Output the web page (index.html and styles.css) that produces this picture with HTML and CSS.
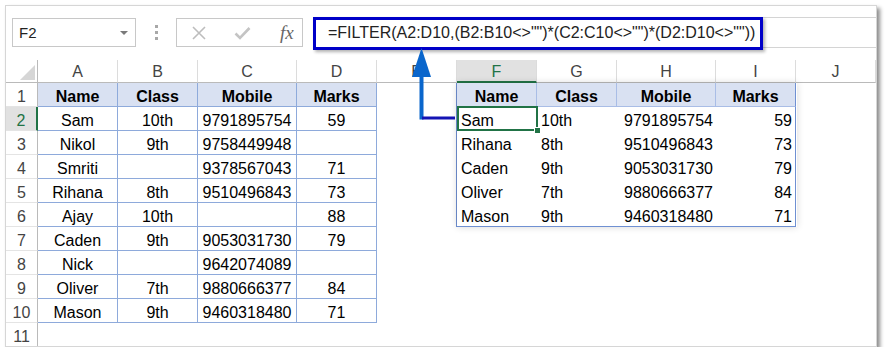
FILE: index.html
```html
<!DOCTYPE html>
<html>
<head>
<meta charset="utf-8">
<link rel="stylesheet" href="styles.css">
</head>
<body>
<div class="window">
  <div class="toolbar">
    <div class="namebox"><span>F2</span><span class="caret"></span></div>
    <div class="dots"><i></i><i></i><i></i></div>
    <div class="fxbox">
      <svg class="ico-x" width="14" height="14" viewBox="0 0 14 14"><path d="M1 1L13 13M13 1L1 13" stroke="#bdbdbd" stroke-width="1.6" fill="none"/></svg>
      <svg class="ico-ok" width="17" height="14" viewBox="0 0 17 14"><path d="M1.5 7.5L6 12L15.5 2" stroke="#c4c4c4" stroke-width="2.6" fill="none"/></svg>
      <span class="fx">fx</span>
    </div>
    <div class="fbar">=FILTER(A2:D10,(B2:B10&lt;&gt;"")*(C2:C10&lt;&gt;"")*(D2:D10&lt;&gt;""))</div>
  </div>

  <div class="sheet">
    <!-- column headers -->
    <div class="c corner"><svg width="15" height="15" viewBox="0 0 15 15"><polygon points="15,0 15,15 0,15" fill="#d6d6d6"/></svg></div>
    <div class="c ch">A</div><div class="c ch">B</div><div class="c ch">C</div><div class="c ch">D</div><div class="c ch">E</div>
    <div class="c ch selc">F</div><div class="c ch">G</div><div class="c ch">H</div><div class="c ch">I</div><div class="c ch">J</div>

    <!-- row 1 -->
    <div class="c rh">1</div>
    <div class="c t hd">Name</div><div class="c t hd">Class</div><div class="c t hd">Mobile</div><div class="c t hd">Marks</div>
    <div class="c eb"></div>
    <div class="c hd hb">Name</div><div class="c hd hb">Class</div><div class="c hd hb">Mobile</div><div class="c hd hb obr">Marks</div>
    <div class="c"></div>

    <!-- row 2 -->
    <div class="c rh selr">2</div>
    <div class="c t">Sam</div><div class="c t">10th</div><div class="c t">9791895754</div><div class="c t">59</div>
    <div class="c eb"></div>
    <div class="c l act">Sam</div><div class="c l">10th</div><div class="c r">9791895754</div><div class="c r obr">59</div>
    <div class="c"></div>

    <!-- row 3 -->
    <div class="c rh">3</div>
    <div class="c t">Nikol</div><div class="c t">9th</div><div class="c t">9758449948</div><div class="c t"></div>
    <div class="c eb"></div>
    <div class="c l">Rihana</div><div class="c l">8th</div><div class="c r">9510496843</div><div class="c r obr">73</div>
    <div class="c"></div>

    <!-- row 4 -->
    <div class="c rh">4</div>
    <div class="c t">Smriti</div><div class="c t"></div><div class="c t">9378567043</div><div class="c t">71</div>
    <div class="c eb"></div>
    <div class="c l">Caden</div><div class="c l">9th</div><div class="c r">9053031730</div><div class="c r obr">79</div>
    <div class="c"></div>

    <!-- row 5 -->
    <div class="c rh">5</div>
    <div class="c t">Rihana</div><div class="c t">8th</div><div class="c t">9510496843</div><div class="c t">73</div>
    <div class="c eb"></div>
    <div class="c l">Oliver</div><div class="c l">7th</div><div class="c r">9880666377</div><div class="c r obr">84</div>
    <div class="c"></div>

    <!-- row 6 -->
    <div class="c rh">6</div>
    <div class="c t">Ajay</div><div class="c t">10th</div><div class="c t"></div><div class="c t">88</div>
    <div class="c eb"></div>
    <div class="c l obb">Mason</div><div class="c l obb">9th</div><div class="c r obb">9460318480</div><div class="c r obr obb">71</div>
    <div class="c"></div>

    <!-- row 7 -->
    <div class="c rh">7</div>
    <div class="c t">Caden</div><div class="c t">9th</div><div class="c t">9053031730</div><div class="c t">79</div>
    <div class="c"></div><div class="c"></div><div class="c"></div><div class="c"></div><div class="c"></div><div class="c"></div>

    <!-- row 8 -->
    <div class="c rh">8</div>
    <div class="c t">Nick</div><div class="c t"></div><div class="c t">9642074089</div><div class="c t"></div>
    <div class="c"></div><div class="c"></div><div class="c"></div><div class="c"></div><div class="c"></div><div class="c"></div>

    <!-- row 9 -->
    <div class="c rh">9</div>
    <div class="c t">Oliver</div><div class="c t">7th</div><div class="c t">9880666377</div><div class="c t">84</div>
    <div class="c"></div><div class="c"></div><div class="c"></div><div class="c"></div><div class="c"></div><div class="c"></div>

    <!-- row 10 -->
    <div class="c rh">10</div>
    <div class="c t">Mason</div><div class="c t">9th</div><div class="c t">9460318480</div><div class="c t">71</div>
    <div class="c"></div><div class="c"></div><div class="c"></div><div class="c"></div><div class="c"></div><div class="c"></div>

    <!-- row 11 -->
    <div class="c rh">11</div>
    <div class="c"></div><div class="c"></div><div class="c"></div><div class="c"></div>
    <div class="c"></div><div class="c"></div><div class="c"></div><div class="c"></div><div class="c"></div><div class="c"></div>
  </div>

  <div class="tshadow"></div>
  <div class="hl"></div>
  <svg class="arrow" width="870" height="340" viewBox="0 0 870 340">
    <rect x="413.5" y="68" width="4" height="45.5" fill="#0a66cc"/>
    <polygon points="415.5,42 406,71 425,71" fill="#0a66cc"/>
    <rect x="416" y="110.5" width="33" height="3" fill="#1414b4"/>
  </svg>
</div>
</body>
</html>
```

FILE: styles.css
```css
body {
  margin: 0;
  background: #ffffff;
  font-family: "Liberation Sans", Arial, sans-serif;
}

.window {
  position: relative;
  box-sizing: border-box;
  width: 872px;
  height: 342px;
  margin: 5px 0 0 5px;
  border: 1px solid #d6d6d6;
  box-shadow: 3px 3px 4px rgba(0, 0, 0, 0.45);
  background: #ffffff;
  overflow: hidden;
}

/* ---------- toolbar ---------- */
.toolbar {
  display: flex;
  align-items: flex-start;
  height: 54px;
  box-sizing: border-box;
  padding: 12px 0 0 6px;
}

.namebox {
  box-sizing: border-box;
  width: 124px;
  height: 29px;
  border: 1px solid #c8c8c8;
  display: flex;
  align-items: center;
  justify-content: space-between;
  padding: 0 7px 0 6px;
  font-size: 15px;
  color: #222222;
}

.caret {
  width: 0;
  height: 0;
  border-left: 4px solid transparent;
  border-right: 4px solid transparent;
  border-top: 4px solid #7a7a7a;
}

.dots {
  width: 40px;
  height: 29px;
  display: flex;
  flex-direction: column;
  align-items: center;
  justify-content: center;
  gap: 3px;
}

.dots i {
  display: block;
  width: 3px;
  height: 3px;
  background: #a8a8a8;
}

.fxbox {
  box-sizing: border-box;
  width: 127px;
  height: 29px;
  border: 1px solid #c8c8c8;
  display: flex;
  align-items: center;
}

.ico-x {
  margin-left: 15px;
}

.ico-ok {
  margin-left: 28px;
}

.fx {
  margin-left: 29px;
  font-family: "Liberation Serif", "Times New Roman", serif;
  font-style: italic;
  font-size: 19px;
  color: #666666;
}

.fbar {
  flex: 1;
  height: 31px;
  margin-top: -1px;
  margin-left: 10px;
  box-sizing: border-box;
  border-top: 1px solid #d4d4d4;
  border-bottom: 1px solid #d4d4d4;
  display: flex;
  align-items: center;
  padding-left: 15px;
  font-size: 16px;
  color: #222222;
  white-space: nowrap;
}

/* ---------- sheet ---------- */
.sheet {
  display: grid;
  grid-template-columns: 32px 80px 80px 99px 80px 80px 80px 80px 99px 80px 1fr;
  grid-template-rows: 23px repeat(11, 24px);
  font-size: 16px;
  color: #000000;
}

.c {
  box-sizing: border-box;
  display: flex;
  align-items: center;
  justify-content: center;
  padding-top: 4px;
  white-space: nowrap;
}

.corner {
  align-items: flex-end;
  justify-content: flex-end;
  padding: 0 2px 2px 0;
  border-right: 1px solid #bababa;
  border-bottom: 1px solid #bababa;
}

.ch {
  padding-top: 1px;
  color: #444444;
  border-right: 1px solid #dcdcdc;
  border-bottom: 1px solid #bababa;
}

.selc {
  background: #e1e1e1;
  color: #217346;
  border-bottom: 2px solid #217346;
  padding-top: 2px;
}

.rh {
  color: #444444;
  border-right: 1px solid #bababa;
  border-bottom: 1px solid #e4e4e4;
}

.selr {
  background: #e1e1e1;
  color: #217346;
  border-right: 2px solid #217346;
}

.t {
  border-right: 1px solid #8eaadb;
  border-bottom: 1px solid #8eaadb;
}

.hd {
  background: #d9e1f2;
  font-weight: bold;
}

.hb {
  border-right: 1px solid #a9bde6;
  border-bottom: 1px solid #a9bde6;
}

.eb {
  border-right: 1px solid #6f90d2;
}

.obr {
  border-right: 1px solid #6f90d2;
}

.obb {
  border-bottom: 1px solid #6f90d2;
}

.l {
  justify-content: flex-start;
  padding-left: 4px;
}

.r {
  justify-content: flex-end;
  padding-right: 3px;
}

.act {
  position: relative;
}

.act::before {
  content: "";
  position: absolute;
  left: 0;
  top: -1px;
  right: -1px;
  bottom: 0;
  border: 2px solid #217346;
  z-index: 2;
}

.act::after {
  content: "";
  position: absolute;
  right: -4px;
  bottom: -3px;
  width: 5px;
  height: 5px;
  background: #217346;
  border: 1px solid #ffffff;
  z-index: 3;
}

/* ---------- annotations ---------- */
.tshadow {
  position: absolute;
  left: 451px;
  top: 77px;
  width: 340px;
  height: 144px;
  box-shadow: 0 0 7px rgba(0, 0, 0, 0.16);
  pointer-events: none;
}

.hl {
  position: absolute;
  left: 307px;
  top: 11px;
  width: 450px;
  height: 33px;
  box-sizing: border-box;
  border: 3px solid #0000c8;
  box-shadow: 2px 2px 3px rgba(0, 0, 0, 0.3);
  pointer-events: none;
}

.arrow {
  position: absolute;
  left: 0;
  top: 0;
  pointer-events: none;
}
```
